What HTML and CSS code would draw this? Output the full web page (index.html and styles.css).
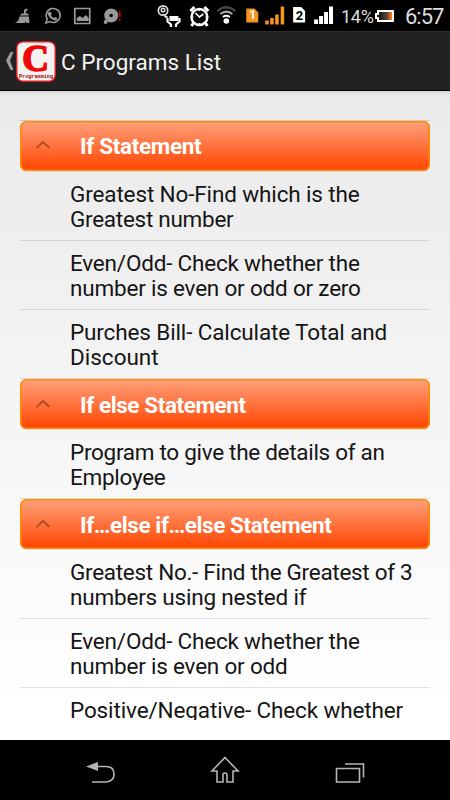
FILE: index.html
```html
<!DOCTYPE html>
<html lang="en">
<head>
<meta charset="utf-8">
<title>C Programs List</title>
<link rel="stylesheet" href="styles.css">
</head>
<body>
<div class="screen">
  <header class="status">
    <svg class="status-icons" width="342" height="31" viewBox="0 0 342 31">
      <g fill="#999">
        <path d="M24 10l3-1.500 1 1-2 2v2h2l1 2h-9l1.500-2H24zM19.500 16.500h9.500l.5 6.500h-3l-.5-2-1 2H15c3-1 4-3 4.500-6.500z"/>
        <path d="M46 23l1.300-4a7 7 0 1 1 2.700 2.600z" fill="none" stroke="#999" stroke-width="1.600"/>
        <path d="M49 12l1.700-.5 1.300 2.500-1 1.200q1 2 3 2.800l1.200-1 2.300 1.300c0 2-2 2.700-4 1.700q-4-1.500-5.300-5c-.4-1.200 0-2.400.8-3z"/>
        <path d="M75 8.500h15v15H75z" fill="none" stroke="#999" stroke-width="1.700"/>
        <path d="M77 21v-3l3-2 3 2 3-3 3 3v3z"/>
        <circle cx="111.500" cy="15.500" r="7"/><circle cx="106" cy="22" r="2"/>
      </g>
      <circle cx="111.500" cy="15.500" r="1.800" fill="#000"/>
      <path d="M120 11v6.500M120 19v2" stroke="#a20c14" stroke-width="2"/>
      <g fill="none" stroke="#ddd">
        <circle cx="163.500" cy="10.500" r="4.700" stroke-width="1.700"/>
        <circle cx="163.500" cy="10" r="1.800" stroke-width="1.500"/>
        <path d="M165 16l3 1.500" stroke-width="2.500"/>
        <path d="M168 18v3.500l3.500 3V27M180 18v3.500l-3.500 3V27" stroke="#fff" stroke-width="2.200"/>
      </g>
      <path d="M170 16h9v5h-9z" fill="#fff"/>
      <g fill="none" stroke="#fff">
        <circle cx="200" cy="17" r="8" stroke-width="2.400"/>
        <path d="M191 11l4-4M209 11l-4-4M194 23l-2 3M206 23l2 3" stroke-width="3"/>
        <path d="M196 13l4 4 4-3M200 10v1M193 17h1M206 17h1M200 23v1" stroke-width="1.600"/>
      </g>
      <g fill="none">
        <path d="M218 11q9-7.500 18 0" stroke="#444" stroke-width="2.300"/>
        <path d="M221 14q6-5 12 0" stroke="#aaa" stroke-width="2.200"/>
        <path d="M223.500 17q3.500-2.500 7 0" stroke="#fff" stroke-width="2"/>
      </g>
      <circle cx="227" cy="21" r="2.800" fill="#fff"/>
      <path d="M247 8.500h8l4 4v10h-12z" fill="#f7941d"/>
      <path d="M266 20.500h3.500v4H266zM271 18h3.500v6.500H271zM276 14.500h3.500v10H276zM281.500 6.500h3.500v18h-3.500z" fill="#f7941d"/>
      <path d="M294 7h8l4 4v11.500h-12z" fill="#fff"/>
      <path d="M315 19.500h4v4.500h-4zM320 16h4v8h-4zM325 12h4v12h-4zM330 6.500h4V24h-4z" fill="#fff"/>
      <text class="sim sim-one" x="250" y="19.500">1</text>
      <text class="sim" x="296.500" y="20">2</text>
    </svg>
    <span class="percent">14%</span>
    <svg class="battery" width="20" height="31" viewBox="0 0 20 31">
      <defs><linearGradient id="charge"><stop stop-color="#050505"/><stop offset=".65" stop-color="#554941"/><stop offset=".8" stop-color="#d65c13"/><stop offset="1" stop-color="#ff9a35"/></linearGradient></defs>
      <path d="M3 11h15v10H3v-3H1v-4h2z" fill="url(#charge)" stroke="#fff" stroke-width="2"/>
    </svg>
    <time class="clock">6:57</time>
  </header>
  <div class="bar">
    <svg class="up" width="10" height="20" viewBox="0 0 10 20"><path d="M5.500 1h3L5 9.500 8.500 19h-3L1 9.500z" fill="#999"/></svg>
    <svg class="logo" width="40" height="41" viewBox="0 0 40 41">
      <rect x=".8" y=".8" width="38.400" height="39.400" rx="6" fill="#f5f3f1" stroke="#f01818" stroke-width="1.300"/>
      <text class="logo-letter" x="19.500" y="29.500" text-anchor="middle">C</text>
      <text class="logo-word" x="3" y="36.500" textLength="34" lengthAdjust="spacingAndGlyphs">Programming</text>
    </svg>
    <h1 class="title">C Programs List</h1>
  </div>
  <main class="list">
    <section>
      <h2 class="group"><svg class="chevron" width="16" height="10" viewBox="0 0 16 10"><path d="M1.500 8L8 2l6.500 6"/></svg><span class="head-a">If Statement</span></h2>
      <p class="item"><span class="snug">Greatest No-Find which is the</span><br><span class="tighter">Greatest number</span></p>
      <p class="item"><span class="tight">Even/Odd- Check whether the</span><br><span class="tight">number is even or odd or zero</span></p>
      <p class="item"><span class="snug">Purches Bill- Calculate Total and</span><br>Discount</p>
    </section>
    <section>
      <h2 class="group"><svg class="chevron" width="16" height="10" viewBox="0 0 16 10"><path d="M1.500 8L8 2l6.500 6"/></svg><span class="head-b">If else Statement</span></h2>
      <p class="item"><span class="tightest">Program to give the details of an</span><br><span class="tighter">Employee</span></p>
    </section>
    <section>
      <h2 class="group"><svg class="chevron" width="16" height="10" viewBox="0 0 16 10"><path d="M1.500 8L8 2l6.500 6"/></svg><span class="head-b">If…else if…else Statement</span></h2>
      <p class="item"><span class="tightest">Greatest No.- Find the Greatest of 3</span><br><span class="tight">numbers using nested if</span></p>
      <p class="item"><span class="tight">Even/Odd- Check whether the</span><br><span class="tight">number is even or odd</span></p>
      <p class="item"><span class="snug">Positive/Negative- Check whether</span></p>
    </section>
  </main>
  <nav class="nav">
    <svg width="450" height="60" viewBox="0 0 450 60" fill="none" stroke="#b5b5b5" stroke-width="1.600">
      <path d="M96 26.500h10q8 0 8 7.500t-8 8H92"/>
      <path d="M86 26.500l12-4.500v9z" fill="#b5b5b5" stroke="none"/>
      <path d="M225 17.500l13 13.500h-5v11h-6v-7q0-2-2-2t-2 2v7h-6V31h-5z"/>
      <path d="M336.500 28.500h23v13.500h-23zM345 24h18.500v13.500"/>
    </svg>
  </nav>
</div>
</body>
</html>
```

FILE: styles.css
```css
* { box-sizing: border-box; }
body { margin: 0; font-family: Roboto, sans-serif; }
h1, h2, p { margin: 0; }
.screen { width: 450px; height: 800px; display: flex; flex-direction: column; overflow: hidden; background: #000; }
.status { height: 31px; flex: none; display: flex; align-items: center; background: #000; color: #ddd; }
.status-icons { flex: none; width: 341px; }
.sim { font: bold 13px "Roboto", sans-serif; fill: #000; }
.sim-one { font-size: 12px; fill: #fff; }
.percent { width: 34px; font-size: 18px; letter-spacing: -.3px; line-height: 31px; padding-top: 2px; white-space: nowrap; }
.battery { flex: none; }
.clock { margin-left: 10px; font-size: 22px; letter-spacing: -1px; line-height: 31px; padding-top: 2px; }
.bar { height: 60px; flex: none; display: flex; align-items: center; padding-left: 5px; background: #222; border-top: 1px solid #2e2e2e; border-bottom: 1px solid #050505; }
.up { flex: none; }
.logo { margin-left: 1px; flex: none; }
.logo-letter { font: bold 37px "Liberation Serif", serif; fill: #f00808; stroke: #f00808; stroke-width: 1.6px; }
.logo-word { font: bold 5px "Liberation Mono", monospace; fill: #a00; }
.title { margin: 1px 0 0 5px; font-size: 22.5px; font-weight: 400; color: #f3f3f3; }
.list { height: 649px; flex: none; padding: 29px 20px 0; overflow: hidden; background: linear-gradient(#d5d5d5, #eaeaea 4px, #fff 620px); border-bottom: 20px solid #fff; }
.list section:first-child { border-top: 1px solid rgba(0, 0, 0, .15); }
.group { height: 50px; margin-bottom: 1px; padding: 0 0 1px 14px; display: flex; align-items: center; font-size: 22.5px; font-weight: 700; color: #fff; background: linear-gradient(#ffa07a, #ff4500) padding-box, #ff8c00 border-box; border: 1px solid #ff8c00; border-radius: 6px; box-shadow: inset 0 0 0 .6px #ff8c00, 0 1px 0 -.5px rgba(0, 0, 0, .15); }
section + section .group { padding-top: 1px; padding-bottom: 0; }
.chevron { margin: 0 29px 2px 0; flex: none; fill: none; stroke: #ad4b27; stroke-width: 1.8; }
.item { height: 69px; padding: 10px 0 0 50px; font-size: 22.5px; line-height: 25px; white-space: nowrap; color: #151515; border-bottom: 1px solid rgba(0, 0, 0, .11); }
.snug { letter-spacing: -.13px; }
.tight { letter-spacing: -.2px; }
.tighter { letter-spacing: -.27px; }
.tightest { letter-spacing: -.29px; }
.head-a { letter-spacing: -.33px; }
.head-b { letter-spacing: -.42px; }
.nav { height: 60px; flex: none; background: #000; }
```
